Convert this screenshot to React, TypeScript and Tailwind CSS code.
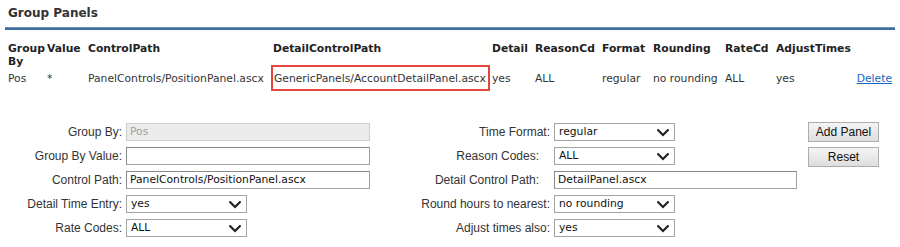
import React from 'react';

const verdana = "font-['DejaVu_Sans',Verdana,sans-serif]";
const arial = "font-['Liberation_Sans',Arial,sans-serif]";

type PanelRow = {
  groupBy: string;
  value: string;
  controlPath: string;
  detailControlPath: string;
  detail: string;
  reasonCd: string;
  format: string;
  rounding: string;
  rateCd: string;
  adjustTimes: string;
};

const rows: PanelRow[] = [
  {
    groupBy: 'Pos',
    value: '*',
    controlPath: 'PanelControls/PositionPanel.ascx',
    detailControlPath: 'GenericPanels/AccountDetailPanel.ascx',
    detail: 'yes',
    reasonCd: 'ALL',
    format: 'regular',
    rounding: 'no rounding',
    rateCd: 'ALL',
    adjustTimes: 'yes',
  },
];

function Chevron() {
  return (
    <svg width="12" height="8" viewBox="0 0 12 8" className="shrink-0">
      <path d="M1.2 1.2 L6 6 L10.8 1.2" fill="none" stroke="#222" strokeWidth="2.2" strokeLinecap="square" />
    </svg>
  );
}

function FakeSelect({ value, width = 'w-[121px]' }: { value: string; width?: string }) {
  return (
    <div
      className={`${width} h-[18px] flex items-center justify-between border border-[#a3a3a3] bg-white pl-[4px] pr-[5px] pt-[1px] text-[10.75px] text-[#111] ${verdana}`}
    >
      <span>{value}</span>
      <Chevron />
    </div>
  );
}

function TextBox({ value = '', width = 'w-[244px]', disabled = false }: { value?: string; width?: string; disabled?: boolean }) {
  return (
    <div
      className={`${width} h-[18px] flex items-center border px-[3px] text-[10.75px] ${verdana} ${
        disabled ? 'border-[#cfcfcf] bg-[#ebebeb] text-[#a0a0a0]' : 'border-[#a0a0a0] border-t-[#8a8a8a] border-l-[#8a8a8a] bg-white text-[#111]'
      }`}
    >
      {value}
    </div>
  );
}

function Label({ children, extra = '' }: { children: React.ReactNode; extra?: string }) {
  return <div className={`h-[24px] flex items-center justify-end text-[12px] text-[#333] ${arial} ${extra}`}>{children}</div>;
}

function Cell({ children }: { children: React.ReactNode }) {
  return <div className="h-[24px] flex items-center">{children}</div>;
}

export default function App() {
  const headers = ['Group By', 'Value', 'ControlPath', 'DetailControlPath', 'Detail', 'ReasonCd', 'Format', 'Rounding', 'RateCd', 'AdjustTimes', ''];
  const widths = ['w-[39px]', 'w-[41px]', 'w-[185px]', 'w-[219px]', 'w-[43px]', 'w-[67px]', 'w-[51px]', 'w-[72px]', 'w-[51px]', 'w-[74px]', 'w-[42px]'];

  return (
    <div className="w-[900px] h-[247px] bg-white overflow-hidden">
      <div className={`pl-[8px] pt-[6px] pb-[6px] text-[12px] leading-[15px] font-bold text-[#333] ${verdana}`}>Group Panels</div>
      <div className="mx-[5px] h-[3px] bg-[#3e6d9e] border-t border-[#6b93bb]" />

      <table className={`ml-[8px] mt-[12px] w-[884px] table-fixed border-collapse text-[10.75px] ${verdana}`}>
        <colgroup>
          {widths.map((w, i) => (
            <col key={i} className={w} />
          ))}
        </colgroup>
        <thead>
          <tr>
            {headers.map((h, i) => (
              <th key={i} className="p-0 text-left align-top font-bold leading-[13px] text-[#222]">
                {h}
              </th>
            ))}
          </tr>
        </thead>
        <tbody>
          {rows.map((r) => (
            <tr key={r.controlPath} className="h-[21px] text-[#333]">
              <td className="p-0 pt-[1px] align-middle">{r.groupBy}</td>
              <td className="p-0 pt-[1px] align-middle">{r.value}</td>
              <td className="p-0 pt-[1px] align-middle whitespace-nowrap">{r.controlPath}</td>
              <td className="relative p-0 pt-[1px] pl-[1px] align-middle whitespace-nowrap">
                {r.detailControlPath}
                <span className="absolute left-[-2px] right-[2px] top-[-3px] bottom-[-2px] border-2 border-[#e5453d]" />
              </td>
              <td className="p-0 pt-[1px] align-middle">{r.detail}</td>
              <td className="p-0 pt-[1px] align-middle">{r.reasonCd}</td>
              <td className="p-0 pt-[1px] align-middle">{r.format}</td>
              <td className="p-0 pt-[1px] align-middle whitespace-nowrap">{r.rounding}</td>
              <td className="p-0 pt-[1px] align-middle">{r.rateCd}</td>
              <td className="p-0 pt-[1px] align-middle">{r.adjustTimes}</td>
              <td className="p-0 pt-[1px] align-middle text-right">
                <a href="#" className="text-[#1565c0] underline">
                  Delete
                </a>
              </td>
            </tr>
          ))}
        </tbody>
      </table>

      <div className="mt-[31px] flex">
        <div className="w-[122px] flex flex-col">
          <Label>Group By:</Label>
          <Label>Group By Value:</Label>
          <Label>Control Path:</Label>
          <Label>Detail Time Entry:</Label>
          <Label>Rate Codes:</Label>
        </div>
        <div className="ml-[4px] w-[244px] flex flex-col">
          <Cell>
            <TextBox value="Pos" disabled />
          </Cell>
          <Cell>
            <TextBox />
          </Cell>
          <Cell>
            <TextBox value="PanelControls/PositionPanel.ascx" />
          </Cell>
          <Cell>
            <FakeSelect value="yes" />
          </Cell>
          <Cell>
            <FakeSelect value="ALL" />
          </Cell>
        </div>
        <div className="ml-[10px] w-[170px] flex flex-col">
          <Label>Time Format:</Label>
          <Label extra="pr-[11px]">Reason Codes:</Label>
          <Label extra="pr-[11px]">Detail Control Path:</Label>
          <Label>Round hours to nearest:</Label>
          <Label>Adjust times also:</Label>
        </div>
        <div className="ml-[4px] w-[243px] flex flex-col">
          <Cell>
            <FakeSelect value="regular" />
          </Cell>
          <Cell>
            <FakeSelect value="ALL" />
          </Cell>
          <Cell>
            <TextBox value="DetailPanel.ascx" width="w-[243px]" />
          </Cell>
          <Cell>
            <FakeSelect value="no rounding" />
          </Cell>
          <Cell>
            <FakeSelect value="yes" />
          </Cell>
        </div>
        <div className="ml-[11px] pt-[2px] flex flex-col gap-[5px]">
          <button className={`w-[71px] h-[20px] border border-[#adadad] bg-gradient-to-b from-[#f4f4f4] to-[#dedede] text-[12px] text-[#111] ${arial}`}>
            Add Panel
          </button>
          <button className={`w-[71px] h-[20px] border border-[#adadad] bg-gradient-to-b from-[#f4f4f4] to-[#dedede] text-[12px] text-[#111] ${arial}`}>
            Reset
          </button>
        </div>
      </div>
    </div>
  );
}
